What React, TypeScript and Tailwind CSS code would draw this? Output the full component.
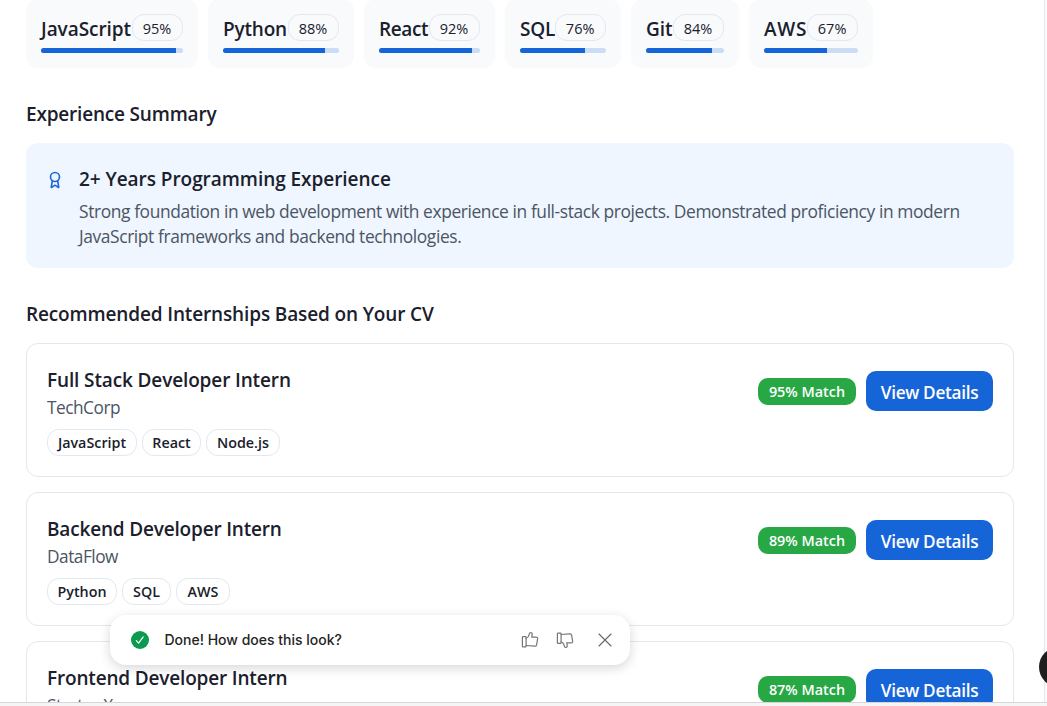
type Skill = { name: string; score: number; width: string; tracking: string };
type Internship = { title: string; company: string; match: number; tracking: string; tags: { label: string; width: string }[] };

const skills: Skill[] = [
  { name: "JavaScript", score: 95, width: "w-[172px]", tracking: "tracking-[-0.06px]" },
  { name: "Python", score: 88, width: "w-[146px]", tracking: "tracking-[-0.2px]" },
  { name: "React", score: 92, width: "w-[131px]", tracking: "tracking-[-0.4px]" },
  { name: "SQL", score: 76, width: "w-[116px]", tracking: "tracking-[-0.2px]" },
  { name: "Git", score: 84, width: "w-[108px]", tracking: "tracking-[-0.1px]" },
  { name: "AWS", score: 67, width: "w-[124px]", tracking: "tracking-[0.7px]" },
];

const internships: Internship[] = [
  {
    title: "Full Stack Developer Intern",
    company: "TechCorp",
    match: 95,
    tracking: "tracking-[-0.13px]",
    tags: [
      { label: "JavaScript", width: "w-[90px]" },
      { label: "React", width: "w-[59px]" },
      { label: "Node.js", width: "w-[74px]" },
    ],
  },
  {
    title: "Backend Developer Intern",
    company: "DataFlow",
    match: 89,
    tracking: "tracking-[-0.18px]",
    tags: [
      { label: "Python", width: "w-[70px]" },
      { label: "SQL", width: "w-[49px]" },
      { label: "AWS", width: "w-[54px]" },
    ],
  },
  {
    title: "Frontend Developer Intern",
    company: "StartupX",
    match: 87,
    tracking: "tracking-[-0.17px]",
    tags: [],
  },
];

function SkillCard({ name, score, width, tracking }: Skill) {
  return (
    <div className={`${width} h-[69px] shrink-0 rounded-xl bg-[#f9fafc] p-[15px]`}>
      <div className="flex h-[27px] items-center justify-between">
        <span className={`${tracking} whitespace-nowrap pt-[3px] text-[19px] leading-6 font-semibold`}>{name}</span>
        <span className="flex h-[27px] w-[51px] shrink-0 items-center justify-center rounded-xl border border-[#e2e8f0] pt-[2px] pr-px text-[14.5px] font-medium">
          {score}%
        </span>
      </div>
      <div className="mt-[7px] h-[5px] overflow-hidden rounded-full bg-[#cbdcf5]">
        <div className="h-full bg-[#1665d8]" style={{ width: `${score}%` }} />
      </div>
    </div>
  );
}

function AwardIcon() {
  return (
    <svg className="mt-[8px] size-[18px] shrink-0 text-[#1d68e0]" viewBox="0 0 24 24" fill="none" stroke="currentColor" strokeWidth="2.2" strokeLinecap="round" strokeLinejoin="round">
      <path d="m15.477 12.89 1.515 8.526a.5.5 0 0 1-.81.47l-3.58-2.687a1 1 0 0 0-1.197 0l-3.586 2.686a.5.5 0 0 1-.81-.469l1.514-8.526" />
      <circle cx="12" cy="8" r="6" />
    </svg>
  );
}

function ThumbIcon({ down = false }: { down?: boolean }) {
  return (
    <svg className={`size-[18px] text-[#777] ${down ? "-scale-y-100" : ""}`} viewBox="0 0 18 18" fill="none" stroke="currentColor" strokeWidth="1.2" strokeLinecap="round" strokeLinejoin="round">
      <path d="M2.1 5.600h2.300q.7 0 .7.7v8.900q0 .7-.7.7H2.100q-.7 0-.7-.7V6.300q0-.7.7-.7Z" />
      <path d="M5.100 7.300C7 6.700 7.900 5.100 8.300 3c.2-1.100.8-1.500 1.600-1.300 1.100.2 1.500 1 1.300 2l-.5 2.400 4.500.1c1.100 0 1.600.7 1.400 1.700l-1 5.900c-.2 1-.9 1.500-1.900 1.400l-8.600-.7" />
    </svg>
  );
}

function InternshipCard({ title, company, match, tracking, tags }: Internship) {
  return (
    <article className="flex h-[134px] shrink-0 justify-between rounded-xl border border-[#e2e8f0] px-5">
      <div className="pt-[22px]">
        <h3 className={`${tracking} text-[19px] leading-7 font-semibold`}>{title}</h3>
        <p className="mt-px text-[17.3px] leading-[26px] tracking-[-0.5px] text-[#4b5563]">{company}</p>
        <div className="mt-[8px] flex gap-[5px]">
          {tags.map((tag) => (
            <span key={tag.label} className={`${tag.width} flex h-[27px] items-center justify-center rounded-xl border border-[#e2e8f0] text-[14.3px] font-semibold`}>
              {tag.label}
            </span>
          ))}
        </div>
      </div>
      <div className="mt-[27px] flex h-10 items-center gap-[10px] self-start">
        <span className="flex h-[27px] w-[98px] items-center justify-center rounded-[10px] bg-[#28a745] pt-px text-[14.4px] font-semibold text-white">{match}% Match</span>
        <button className="h-10 w-[127px] rounded-[10px] bg-[#1665d8] pt-[3px] text-[17.2px] font-semibold tracking-[-0.3px] text-white">View Details</button>
      </div>
    </article>
  );
}

function Toast() {
  return (
    <div className="absolute top-[615px] left-[110px] flex h-[50px] w-[520px] items-center rounded-2xl bg-white pr-4 pl-[21px] shadow-[0_3px_12px_rgba(0,0,0,0.16)]">
      <svg className="size-[18px]" viewBox="0 0 18 18" fill="none">
        <circle cx="9" cy="9" r="9" fill="#0a9a50" />
        <path d="m5.300 9.600 2.300 2.500 4.600-6.200" stroke="white" strokeWidth="1.200" strokeLinecap="round" strokeLinejoin="round" />
      </svg>
      <span className="ml-[15.5px] flex-1 pb-px font-['Inter',sans-serif] text-[14px] font-medium text-[#242424]">Done! How does this look?</span>
      <div className="flex items-center gap-[17px]">
        <ThumbIcon />
        <ThumbIcon down />
      </div>
      <svg className="ml-[22px] size-[18px]" viewBox="0 0 18 18" fill="none" stroke="#666" strokeWidth="1.100" strokeLinecap="round">
        <path d="m3 3 12 12M15 3 3 15" />
      </svg>
    </div>
  );
}

export default function App() {
  return (
    <div className="relative flex h-[706px] w-[1047px] flex-col overflow-hidden bg-[#f5f5f5] font-['Open_Sans',sans-serif] text-[#1a202c]">
      <div className="flex h-[702px] shrink-0 overflow-hidden bg-[#f9fafc]">
        <main className="flex h-[790px] w-[1045px] flex-col border-r border-[#e2e8f0] bg-white pr-[30px] pl-[26px]">
          <div className="-mt-px flex gap-[10px]">
            {skills.map((skill) => (
              <SkillCard key={skill.name} {...skill} />
            ))}
          </div>
          <h2 className="mt-[32px] text-[19px] leading-7 font-semibold tracking-[-0.19px]">Experience Summary</h2>
          <section className="mt-[15px] flex h-[125px] shrink-0 gap-[15px] rounded-xl bg-[#eff6ff] p-5">
            <AwardIcon />
            <div className="pt-[2px]">
              <h3 className="text-[19px] leading-7 font-semibold tracking-[-0.05px]">2+ Years Programming Experience</h3>
              <p className="mt-[6px] text-[17.4px] leading-[25px] tracking-[-0.4px] whitespace-nowrap text-[#4b5563]">
                Strong foundation in web development with experience in full-stack projects. Demonstrated proficiency in modern
                <br />
                JavaScript frameworks and backend technologies.
              </p>
            </div>
          </section>
          <h2 className="mt-[32px] text-[19px] leading-7 font-semibold tracking-[-0.14px]">Recommended Internships Based on Your CV</h2>
          <div className="mt-[15px] flex flex-col gap-[15px]">
            {internships.map((internship) => (
              <InternshipCard key={internship.title} {...internship} />
            ))}
          </div>
        </main>
      </div>
      <div className="h-px shrink-0 bg-[#d6d6d6]" />
      <Toast />
      <div className="absolute top-[647px] left-[1039px] size-10 rounded-full bg-[#1e1e1e]" />
    </div>
  );
}
